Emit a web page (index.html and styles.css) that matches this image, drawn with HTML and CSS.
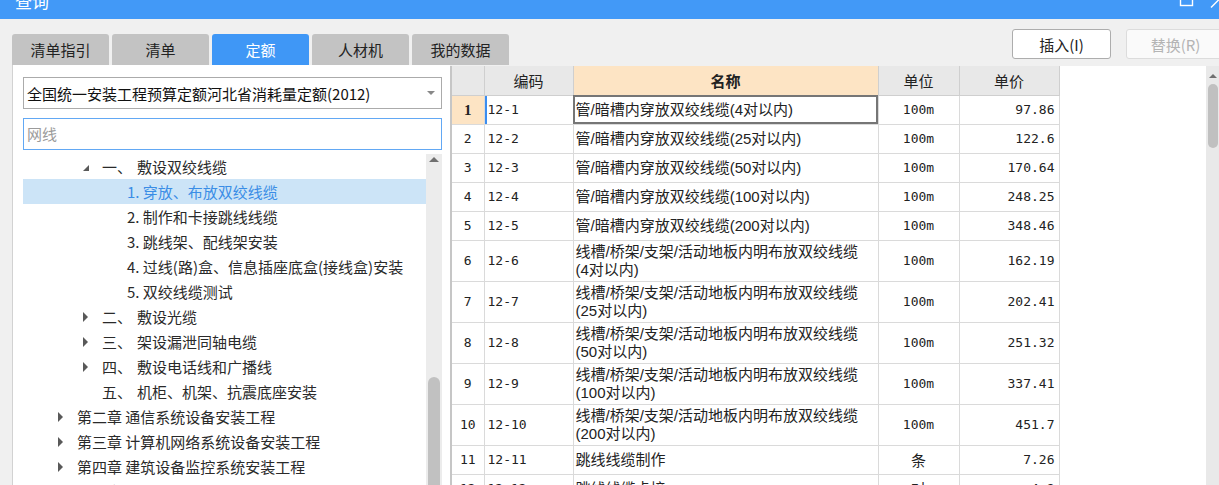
FILE: index.html
```html
<!DOCTYPE html>
<html lang="zh-CN">
<head>
<meta charset="utf-8">
<title>查询</title>
<link rel="stylesheet" href="styles.css">
</head>
<body>
<div class="titlebar">
  <span class="title">查询</span>
  <svg class="winbtns" width="45" height="19" viewBox="0 0 45 19">
    <rect x="6.5" y="-7.5" width="12" height="13" fill="none" stroke="#fff" stroke-width="1.4"/>
    <line x1="37" y1="7.5" x2="46" y2="-1.5" stroke="#fff" stroke-width="1.4"/>
  </svg>
</div>
<div class="toolbar">
  <div class="tabs">
    <div class="tab">清单指引</div>
    <div class="tab">清单</div>
    <div class="tab active">定额</div>
    <div class="tab">人材机</div>
    <div class="tab">我的数据</div>
  </div>
  <div class="actions">
    <button class="btn">插入(I)</button>
    <button class="btn disabled">替换(R)</button>
  </div>
</div>
<div class="frame">
  <div class="left">
    <div class="select"><span class="select-text">全国统一安装工程预算定额河北省消耗量定额(2012)</span><i class="caret"></i></div>
    <div class="search">网线</div>
    <div class="treewrap">
      <div class="tree">
        <div class="node l2"><span class="tw"><i class="exp"></i></span><span class="num">一、</span>敷设双绞线缆</div>
        <div class="node l3 sel"><span class="tw"></span>1. 穿放、布放双绞线缆</div>
        <div class="node l3"><span class="tw"></span>2. 制作和卡接跳线线缆</div>
        <div class="node l3"><span class="tw"></span>3. 跳线架、配线架安装</div>
        <div class="node l3"><span class="tw"></span>4. 过线(路)盒、信息插座底盒(接线盒)安装</div>
        <div class="node l3"><span class="tw"></span>5. 双绞线缆测试</div>
        <div class="node l2"><span class="tw"><i class="col"></i></span><span class="num">二、</span>敷设光缆</div>
        <div class="node l2"><span class="tw"><i class="col"></i></span><span class="num">三、</span>架设漏泄同轴电缆</div>
        <div class="node l2"><span class="tw"><i class="col"></i></span><span class="num">四、</span>敷设电话线和广播线</div>
        <div class="node l2"><span class="tw"></span><span class="num">五、</span>机柜、机架、抗震底座安装</div>
        <div class="node l1"><span class="tw"><i class="col"></i></span>第二章 通信系统设备安装工程</div>
        <div class="node l1"><span class="tw"><i class="col"></i></span>第三章 计算机网络系统设备安装工程</div>
        <div class="node l1"><span class="tw"><i class="col"></i></span>第四章 建筑设备监控系统安装工程</div>
        <div class="node l1"><span class="tw"><i class="col"></i></span>第五章 有线电视、卫星接收系统工程</div>
      </div>
      <div class="vscroll">
        <i class="up"></i>
        <div class="thumb"></div>
      </div>
    </div>
  </div>
  <div class="right">
    <div class="grid">
      <table>
        <colgroup>
          <col class="c-no"><col class="c-code"><col class="c-name"><col class="c-unit"><col class="c-price">
        </colgroup>
        <thead>
          <tr><th></th><th>编码</th><th class="hl">名称</th><th>单位</th><th>单价</th></tr>
        </thead>
        <tbody>
          <tr><td class="no cur">1</td><td class="code curcode">12-1</td><td class="name curcell">管/暗槽内穿放双绞线缆(4对以内)</td><td class="unit">100m</td><td class="price">97.86</td></tr>
          <tr><td class="no">2</td><td class="code">12-2</td><td class="name">管/暗槽内穿放双绞线缆(25对以内)</td><td class="unit">100m</td><td class="price">122.6</td></tr>
          <tr><td class="no">3</td><td class="code">12-3</td><td class="name">管/暗槽内穿放双绞线缆(50对以内)</td><td class="unit">100m</td><td class="price">170.64</td></tr>
          <tr><td class="no">4</td><td class="code">12-4</td><td class="name">管/暗槽内穿放双绞线缆(100对以内)</td><td class="unit">100m</td><td class="price">248.25</td></tr>
          <tr><td class="no">5</td><td class="code">12-5</td><td class="name">管/暗槽内穿放双绞线缆(200对以内)</td><td class="unit">100m</td><td class="price">348.46</td></tr>
          <tr class="tall"><td class="no">6</td><td class="code">12-6</td><td class="name">线槽/桥架/支架/活动地板内明布放双绞线缆<br>(4对以内)</td><td class="unit">100m</td><td class="price">162.19</td></tr>
          <tr class="tall"><td class="no">7</td><td class="code">12-7</td><td class="name">线槽/桥架/支架/活动地板内明布放双绞线缆<br>(25对以内)</td><td class="unit">100m</td><td class="price">202.41</td></tr>
          <tr class="tall"><td class="no">8</td><td class="code">12-8</td><td class="name">线槽/桥架/支架/活动地板内明布放双绞线缆<br>(50对以内)</td><td class="unit">100m</td><td class="price">251.32</td></tr>
          <tr class="tall"><td class="no">9</td><td class="code">12-9</td><td class="name">线槽/桥架/支架/活动地板内明布放双绞线缆<br>(100对以内)</td><td class="unit">100m</td><td class="price">337.41</td></tr>
          <tr class="tall"><td class="no">10</td><td class="code">12-10</td><td class="name">线槽/桥架/支架/活动地板内明布放双绞线缆<br>(200对以内)</td><td class="unit">100m</td><td class="price">451.7</td></tr>
          <tr><td class="no">11</td><td class="code">12-11</td><td class="name">跳线线缆制作</td><td class="unit cjk">条</td><td class="price">7.26</td></tr>
          <tr><td class="no">12</td><td class="code">12-12</td><td class="name">跳线线缆卡接</td><td class="unit cjk">对</td><td class="price">4.8</td></tr>
        </tbody>
      </table>
    </div>
    <div class="vscroll2">
      <i class="up2"></i>
      <div class="thumb2"></div>
    </div>
  </div>
</div>
</body>
</html>
```

FILE: styles.css
```css
* { box-sizing: border-box; margin: 0; padding: 0; }
html, body { width: 1219px; height: 485px; overflow: hidden; }
body {
  background: #f0f0f0;
  font-family: "Noto Sans CJK SC", "Noto Sans", sans-serif;
  font-size: 15px;
  color: #222;
}

/* title bar */
.titlebar {
  height: 19px;
  background: #4299f7;
  display: flex;
  overflow: hidden;
  padding-left: 15px;
}
.title {
  color: #fff;
  font-size: 17px;
  line-height: 17px;
  margin-top: -8px;
}
.winbtns { margin-left: auto; flex: none; overflow: visible; }

/* toolbar with tabs and buttons */
.toolbar {
  height: 46px;
  display: flex;
  padding-left: 12px;
}
.tabs { display: flex; gap: 3px; align-self: flex-end; }
.tab {
  width: 97px;
  height: 31px;
  line-height: 31px;
  text-align: center;
  background: #c3c3c3;
  border-radius: 3px 3px 0 0;
  color: #222;
}
.tab.active { background: #3f97f6; color: #fff; }
.actions {
  margin-left: auto;
  margin-right: -6px;
  display: flex;
  gap: 15px;
  padding-top: 10px;
}
.btn {
  width: 99px;
  height: 30px;
  background: #fff;
  border: 1px solid #adadad;
  border-radius: 3px;
  font-family: inherit;
  font-size: 15px;
  color: #222;
}
.btn.disabled { border-color: #dcdcdc; color: #b4b4b4; background: #fafafa; }

/* main frame */
.frame { display: flex; height: 420px; margin-left: 12px; overflow: hidden; }
.left {
  width: 438px;
  flex: none;
  background: #fff;
  border-left: 1px solid #d2d2d2;
  padding: 12px 8px 0 10px;
  display: flex;
  flex-direction: column;
}
.select {
  height: 32px;
  flex: none;
  border: 1px solid #ababab;
  display: flex;
  align-items: center;
  padding: 0 6px 0 3px;
  color: #111;
}
.select-text { flex: 1; white-space: nowrap; }
.caret {
  width: 0; height: 0;
  border-left: 4px solid transparent;
  border-right: 4px solid transparent;
  border-top: 4px solid #888;
}
.search {
  margin-top: 9px;
  height: 32px;
  flex: none;
  line-height: 30px;
  border: 1px solid #62a8f4;
  padding-left: 3px;
  color: #9b9b9b;
}
.treewrap {
  margin-top: 4px;
  flex: 1;
  display: flex;
  min-height: 0;
}
.tree { flex: 1; overflow: hidden; }
.node {
  height: 25px;
  display: flex;
  align-items: center;
  white-space: nowrap;
  color: #2a2a2a;
}
.node.l1 { padding-left: 35px; }
.node.l2 { padding-left: 60px; }
.node.l3 { padding-left: 85px; }
.node.sel { background: #cce4f7; color: #3a8de6; }
.tw { width: 19px; flex: none; display: flex; align-items: center; }
.num { margin-right: 5px; }
.col {
  width: 0; height: 0;
  border-left: 5px solid #595959;
  border-top: 5px solid transparent;
  border-bottom: 5px solid transparent;
}
.exp {
  width: 0; height: 0;
  border-right: 6px solid #595959;
  border-top: 6px solid transparent;
  margin-top: 2px;
}
.vscroll {
  width: 16px;
  flex: none;
  background: #ececec;
  display: flex;
  flex-direction: column;
  align-items: center;
}
.up {
  margin-top: 3px;
  width: 0; height: 0;
  border-left: 5px solid transparent;
  border-right: 5px solid transparent;
  border-bottom: 5px solid #707070;
}
.thumb {
  margin-top: 215px;
  width: 12px;
  height: 200px;
  flex: none;
  border-radius: 6px;
  background: #c1c1c1;
}

/* right grid */
.right {
  flex: 1;
  margin-top: 1px;
  background: #fff;
  display: flex;
  align-items: stretch;
}
.grid { flex: 1; overflow: hidden; }
table {
  border-collapse: collapse;
  table-layout: fixed;
  width: 608px;
}
.c-no { width: 33px; }
.c-code { width: 89px; }
.c-name { width: 305px; }
.c-unit { width: 81px; }
.c-price { width: 100px; }
th {
  height: 29px;
  background: #e8e8e8;
  border: 1px solid #cfcfcf;
  border-top: none;
  font-weight: normal;
  font-size: 15px;
  color: #222;
}
th.hl { background: #fde4c4; font-weight: bold; }
td {
  height: 29px;
  border: 1px solid #dadada;
  font-size: 15px;
  line-height: 18px;
  color: #222;
  white-space: nowrap;
  overflow: hidden;
}
tr.tall td { height: 41px; }
th:first-child, td:first-child { border-left: 2px solid #c6c6c6; }
td.no {
  text-align: center;
  font-family: "DejaVu Sans Mono", "Liberation Mono", monospace;
  font-size: 13px;
}
td.no.cur { background: #fde4c4; font-weight: bold; font-family: "Liberation Serif", serif; font-size: 15px; }
td.code {
  padding-left: 3px;
  font-family: "DejaVu Sans Mono", "Liberation Mono", monospace;
  font-size: 13px;
}
td.curcode { box-shadow: inset 2px 0 0 #3b8df0; }
td.name {
  padding-left: 2px;
  font-family: "Liberation Sans", "Noto Sans CJK SC", sans-serif;
}
td.curcell { outline: 2px solid #767676; outline-offset: -2px; }
td.unit {
  text-align: center;
  font-family: "DejaVu Sans Mono", "Liberation Mono", monospace;
  font-size: 13px;
}
td.unit.cjk { font-family: "Noto Sans CJK SC", sans-serif; font-size: 15px; }
td.price {
  text-align: right;
  padding-right: 4px;
  font-family: "DejaVu Sans Mono", "Liberation Mono", monospace;
  font-size: 13px;
}
.vscroll2 {
  width: 13px;
  flex: none;
  background: #e9e9e9;
  display: flex;
  flex-direction: column;
  align-items: center;
}
.up2 {
  margin-top: 8px;
  width: 0; height: 0;
  border-left: 4px solid transparent;
  border-right: 4px solid transparent;
  border-bottom: 4px solid #707070;
}
.thumb2 {
  margin-top: 6px;
  width: 10px;
  height: 64px;
  flex: none;
  border-radius: 5px;
  background: #c0c0c0;
}
```
